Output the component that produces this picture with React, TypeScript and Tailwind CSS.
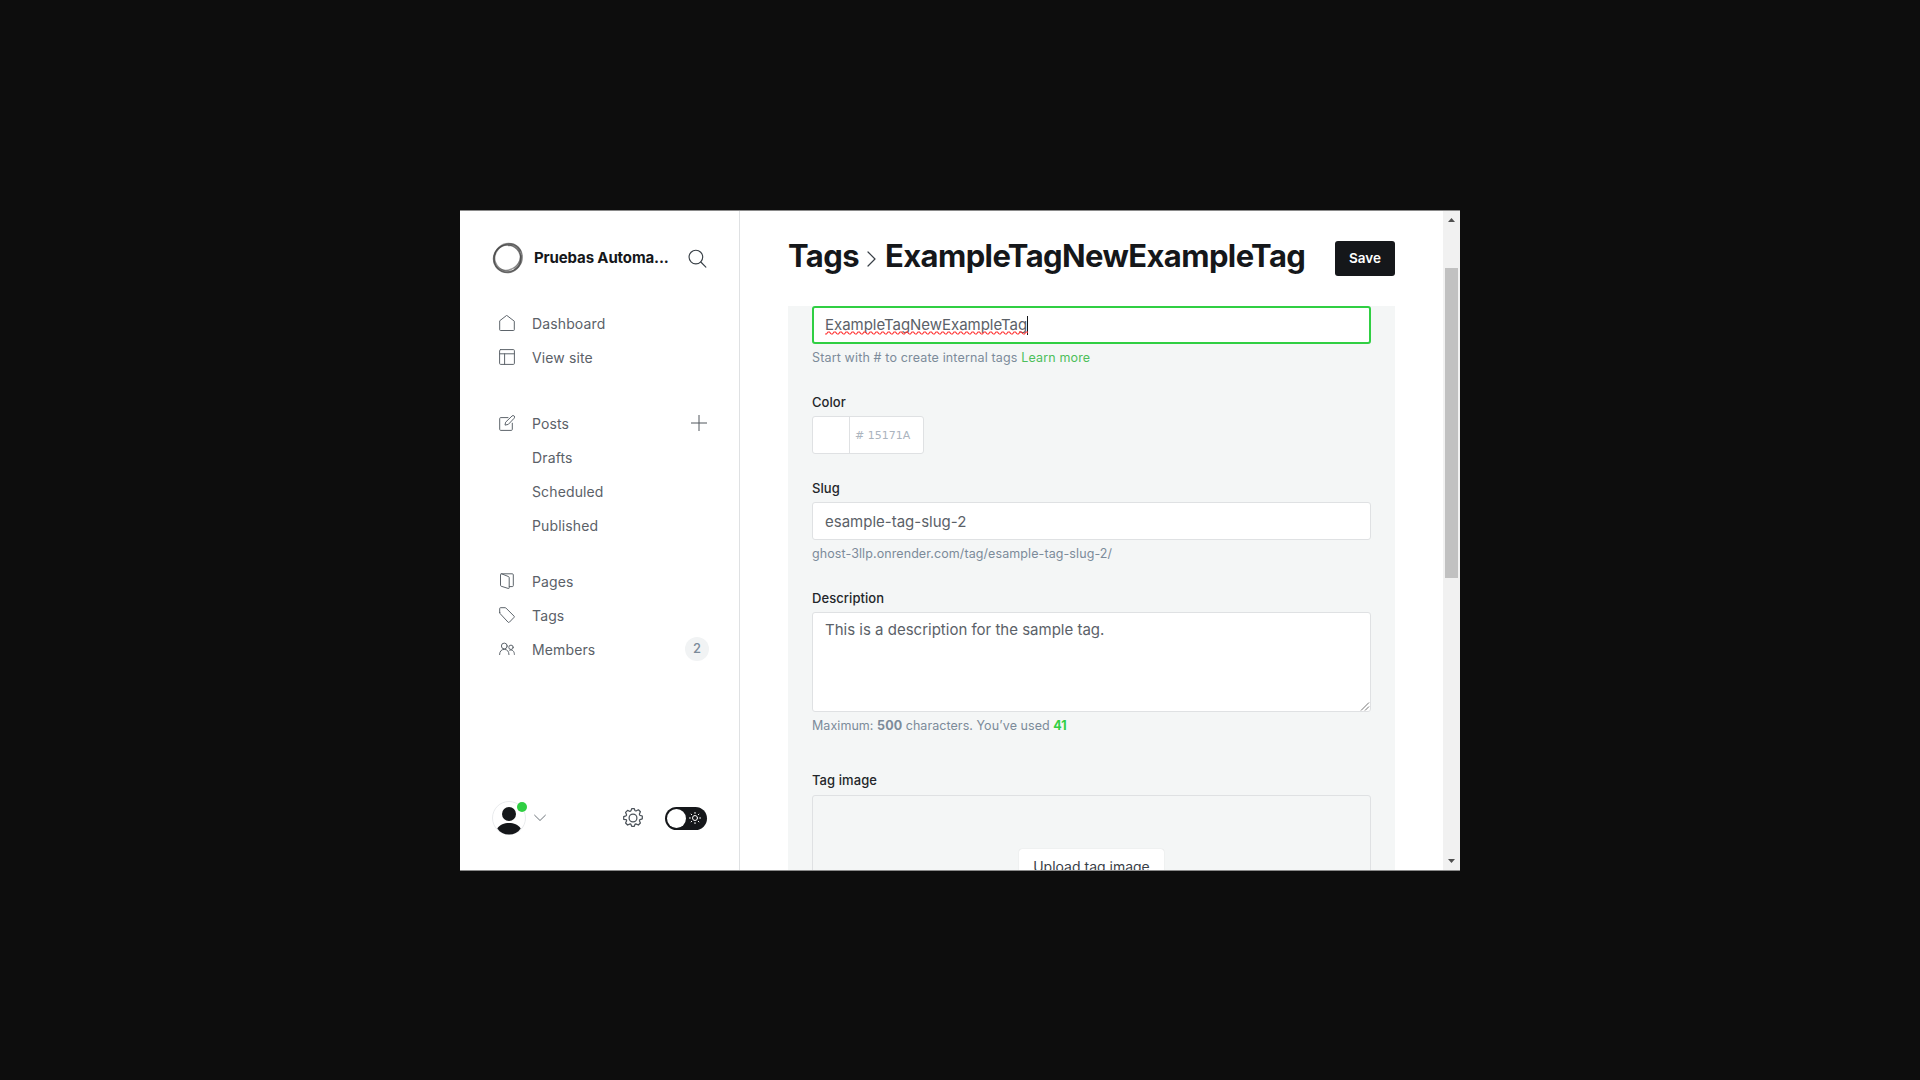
import React from "react";

type IconProps = { className?: string; children: React.ReactNode; box?: string; sw?: number };

function Icon({ className = "size-4", children, box = "0 0 16 16", sw = 1 }: IconProps) {
  return (
    <svg viewBox={box} className={className} fill="none" stroke="currentColor" strokeWidth={sw} strokeLinecap="round" strokeLinejoin="round">
      {children}
    </svg>
  );
}

const HomeIcon = () => (
  <Icon>
    <path d="M.7 6.2v8.6q0 .7.7.7h13.2q.7 0 .7-.7V6.2L8 .6z" />
  </Icon>
);
const LayoutIcon = () => (
  <Icon>
    <rect x=".6" y=".6" width="14.8" height="14.8" rx="1" />
    <path d="M.6 4.8h14.8M5.6 4.8v10.6" />
  </Icon>
);
const PencilIcon = () => (
  <Icon>
    <path d="M9 2.6H1.7q-1 0-1 1v10.8q0 1 1 1h10.6q1 0 1-1V8.2" />
    <path d="M8.900 9.500 6 10.100l.6-2.900L13 1a1.500 1.500 0 0 1 2.200 2.200z" />
  </Icon>
);
const PagesIcon = () => (
  <Icon>
    <path d="M2.200.8q-.7 0-.7.7v10.900q0 .6.6.8l7.300 2.300q.8.200.8-.6V4.400q0-.6-.6-.8z" />
    <path d="M2.200.8h11.100q1 0 1 1v10.800q0 1-1 1h-3" />
  </Icon>
);
const TagIcon = () => (
  <Icon>
    <path d="M.7 5.600V1.500q0-.8.8-.8h4.600q.5 0 .9.400l8 8q.7.700 0 1.300l-4.600 4.800q-.7.600-1.300 0L1.100 6.600q-.4-.4-.4-1z" />
  </Icon>
);
const MembersIcon = () => (
  <Icon>
    <circle cx="5.300" cy="5" r="2.900" />
    <path d="M.6 13.600c0-3.400 1.800-5.200 4.700-5.200s4.600 1.800 4.700 5.200" />
    <circle cx="12" cy="6.300" r="2.200" />
    <path d="M10.700 9.200c2.800-.8 4.700 1 4.700 4.200" />
  </Icon>
);

function NavRow({ icon, label, right }: { icon?: React.ReactNode; label: string; right?: React.ReactNode }) {
  return (
    <div className="flex h-[34px] items-center pl-[39px] pr-[30px] text-[#394047]">
      <span className="w-[33px] text-[#5d646b]">{icon}</span>
      <span className="flex-1 text-[14px] tracking-[0.13px] text-[#5b6168]">{label}</span>
      {right}
    </div>
  );
}

function Sidebar() {
  return (
    <aside className="flex w-[280px] shrink-0 flex-col border-r border-[#dfe1e3]">
      <div className="flex h-[94px] items-center pl-8">
        <svg viewBox="0 0 32 32" className="size-8" fill="none" stroke="#444">
          <circle cx="15.300" cy="16.700" r="13.700" strokeWidth="1.600" opacity=".75" />
          <circle cx="16.500" cy="15.300" r="13.900" strokeWidth="1.200" opacity=".55" />
          <ellipse cx="15" cy="16" rx="12.400" ry="14" strokeWidth="1.300" opacity=".55" transform="rotate(50 16 16)" />
          <ellipse cx="16" cy="15.800" rx="12.800" ry="15" strokeWidth="1" opacity=".45" transform="rotate(35 16 16)" />
          <path d="M16 3.500c5-1.500 10 .5 12.500 6M28.500 13c.5 6-2 11-6.500 14" strokeWidth="2" opacity=".4" />
        </svg>
        <span className="ml-[10px] w-[154px] whitespace-nowrap pt-px text-[15px] font-bold tracking-[-0.13px] text-[#15171a]">Pruebas Automa...</span>
        <Icon className="size-[19px] text-[#394047]" box="0 0 20 20" sw={1.200}>
          <circle cx="8.300" cy="8.500" r="7.200" />
          <path d="m13.500 13.700 5.300 5.300" />
        </Icon>
      </div>
      <nav className="mt-px flex flex-col">
        <NavRow icon={<HomeIcon />} label="Dashboard" />
        <NavRow icon={<LayoutIcon />} label="View site" />
        <div className="h-8" />
        <NavRow
          icon={<PencilIcon />}
          label="Posts"
          right={
            <Icon className="mr-[2px] size-4 text-[#50565d]">
              <path d="M8 .3v15.400M.3 8h15.400" />
            </Icon>
          }
        />
        <NavRow label="Drafts" />
        <NavRow label="Scheduled" />
        <NavRow label="Published" />
        <div className="h-[22px]" />
        <NavRow icon={<PagesIcon />} label="Pages" />
        <NavRow icon={<TagIcon />} label="Tags" />
        <NavRow
          icon={<MembersIcon />}
          label="Members"
          right={<span className="flex size-6 items-center justify-center rounded-full bg-[#f1f3f4] text-[13px] font-medium text-[#7c8b9a]">2</span>}
        />
      </nav>
      <footer className="mb-[34px] mt-auto flex h-[36px] items-center pl-8">
        <div className="relative">
          <svg viewBox="0 0 34 34" className="size-[34px]">
            <circle cx="17" cy="17" r="16.500" fill="#fff" stroke="#e9ebed" />
            <circle cx="17" cy="13" r="7" fill="#15171a" />
            <path d="M5.300 27.500C8 23.500 12 22 17 22s9 1.500 11.700 5.500C26 31.500 22 33.500 17 33.500S8 31.500 5.300 27.500z" fill="#15171a" />
          </svg>
          <span className="absolute left-[25px] top-[1px] size-[10px] rounded-full bg-[#30cf43]" />
        </div>
        <Icon className="ml-2 h-2 w-3 text-[#6b7278]" box="0 0 12 8">
          <path d="m.6 1.200 5.400 5.300 5.400-5.300" />
        </Icon>
        <Icon className="ml-[77px] size-5 text-[#4c535a]" box="0 0 20 20" sw={1.250}>
          <circle cx="10" cy="10" r="3.900" />
          <path d="m8.200 2.200.5-1.500h2.600l.5 1.500q.5 1 1.600.6l2-1 2 2-.9 2q-.4 1.100.6 1.500l2.200.7v2.800l-2.200.8q-1 .4-.6 1.400l.9 2-2 2-2-.9q-1.100-.4-1.600.7l-.5 1.600H8.700l-.6-1.600q-.4-1.100-1.500-.7l-2 .9-2-2 .9-2q.4-1-.6-1.400L.7 11.300V8.600l2.200-.8q1-.4.600-1.400l-.9-2 2-2 2 .9q1.200.3 1.600-1.100z" />
        </Icon>
        <span className="ml-[22px] flex h-[23px] w-[42px] items-center rounded-full bg-[#15171a] pl-[2px]">
          <span className="size-[19px] rounded-full bg-white" />
          <Icon className="ml-[3px] size-3 text-white" box="0 0 12 12">
            <circle cx="6" cy="6" r="2.500" />
            <path d="M6 .4v1M6 10.600v1M.4 6h1M10.600 6h1M2.100 2.100l.6.6M9.300 9.300l.6.6M2.100 9.900l.6-.6M9.300 2.700l.6-.6" />
          </Icon>
        </span>
      </footer>
    </aside>
  );
}

function Label({ children }: { children: React.ReactNode }) {
  return <div className="h-6 shrink-0 text-[13px] font-medium leading-5 tracking-[0.07px] text-[#23262a]">{children}</div>;
}

function Main() {
  return (
    <main className="flex w-[703px] flex-col pl-12 pr-12">
      <header className="flex h-[95px] shrink-0 items-center">
        <h1 className="-mt-[5px] flex items-center whitespace-nowrap text-[31px] font-bold leading-10 tracking-[-0.6px] text-[#15171a]">
          <span className="w-[79px]">Tags</span>
          <Icon className="mr-[9px] mt-[6px] h-4 w-[9px] text-[#394047]" box="0 0 9 16" sw={1.200}>
            <path d="m1 1 7 7-7 7" />
          </Icon>
          <span>ExampleTagNewExampleTag</span>
        </h1>
        <button className="ml-auto flex h-[35px] w-[60px] items-center justify-center rounded-[3px] bg-[#15171a] text-[13.500px] font-semibold text-white">
          Save
        </button>
      </header>
      <section className="flex flex-1 flex-col overflow-hidden bg-[#f4f6f6] px-6">
        <div className="relative flex h-[38px] shrink-0 items-center rounded-[3px] border-2 border-[#30cf43] bg-white pl-[11px] text-[15px] tracking-[-0.03px] text-[#5b6168]">
          <span>ExampleTagNewExampleTag</span>
          <span className="h-[19px] w-px bg-[#15171a]" />
          <svg className="absolute left-[11px] top-[23px] h-[4px] w-[203px]" fill="none" stroke="#f33">
            <defs>
              <pattern id="squiggle" width="6" height="4" patternUnits="userSpaceOnUse">
                <path d="M0 3 1.500 3 3 1l1.500 0L6 3" strokeWidth="1.200" />
              </pattern>
            </defs>
            <rect width="203" height="4" fill="url(#squiggle)" stroke="none" />
          </svg>
        </div>
        <p className="mt-1 h-[44px] shrink-0 text-[12.500px] leading-5 tracking-[0.150px] text-[#7c8b9a]">
          <span>Start with # to create internal tags </span>
          <span className="text-[#4dbf5b]">Learn more</span>
        </p>
        <Label>Color</Label>
        <div className="flex h-[38px] w-[112px] shrink-0 rounded-[3px] border border-[#dfe1e3] bg-white">
          <span className="w-[37px] border-r border-[#dfe1e3]" />
          <span className="flex items-center pl-[5px] pt-[3px] font-[DejaVu_Sans] text-[11px] text-[#abb4be]"># 15171A</span>
        </div>
        <div className="mt-6 shrink-0">
          <Label>Slug</Label>
          <div className="flex h-[38px] items-center rounded-[3px] border border-[#dfe1e3] bg-white pl-3 pt-[2px] text-[15px] text-[#5b6168]">
            <span>esample-tag-slug-2</span>
          </div>
          <p className="mt-1 text-[12.500px] leading-5 tracking-[0.09px] text-[#7c8b9a]">ghost-3llp.onrender.com/tag/esample-tag-slug-2/</p>
        </div>
        <div className="mt-6 shrink-0">
          <Label>Description</Label>
          <div className="relative h-[100px] rounded-[3px] border border-[#dfe1e3] bg-white pl-3 pt-[6px] text-[15px] leading-[22px] text-[#5b6168]">
            <span>This is a description for the sample tag.</span>
            <svg className="absolute bottom-0 right-0 size-[10px]" stroke="#777" fill="none">
              <path d="M1 9.500 9 1.500M5 9.500l4-4" />
            </svg>
          </div>
          <p className="mt-1 text-[12.500px] leading-5 tracking-[0.06px] text-[#7c8b9a]">
            <span>Maximum: </span>
            <b>500</b>
            <span> characters. You’ve used </span>
            <b className="text-[#30cf43]">41</b>
          </p>
        </div>
        <div className="mt-[34px] shrink-0">
          <Label>Tag image</Label>
          <div className="mt-px flex h-40 justify-center rounded-[3px] border border-[#dfe1e3] pt-[53px]">
            <span className="flex h-[34px] w-[145px] items-center justify-center rounded-[3px] bg-white text-[14px] text-[#394047] shadow-[0_0_1px_rgba(0,0,0,0.2)]">
              Upload tag image
            </span>
          </div>
        </div>
      </section>
    </main>
  );
}

function Scrollbar() {
  return (
    <div className="flex w-[17px] flex-col items-center bg-[#f1f1f1]">
      <svg viewBox="0 0 7 4" className="mt-[7px] h-1 w-[7px]" fill="#505050">
        <path d="M0 4h7L3.500 0z" />
      </svg>
      <span className="mt-[46px] h-[310px] w-[13px] bg-[#c1c1c1]" />
      <svg viewBox="0 0 7 4" className="mb-[7px] mt-auto h-1 w-[7px]" fill="#505050">
        <path d="M0 0h7L3.500 4z" />
      </svg>
    </div>
  );
}

export default function App() {
  return (
    <div className="flex h-[1080px] w-[1920px] bg-[#0d0d0d] pl-[460px] pt-[210px] font-[Inter,sans-serif]">
      <div className="flex h-[661px] w-[1000px] overflow-hidden border-y border-[#8a8a8a] bg-white">
        <Sidebar />
        <Main />
        <Scrollbar />
      </div>
    </div>
  );
}
